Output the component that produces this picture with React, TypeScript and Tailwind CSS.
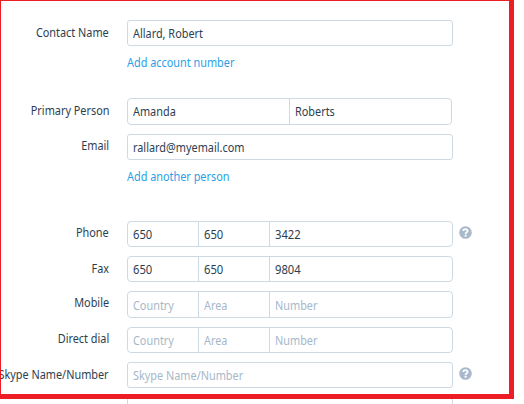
import React from "react";

type Cell = { text: string; width: string; hint?: boolean; digits?: boolean };

function Cells({ cells, box, pad }: { cells: Cell[]; box: string; pad: string }) {
  return (
    <div className={`flex shrink-0 border border-[#cddae3] bg-white ${box}`}>
      {cells.map((c, i) => (
        <div
          key={i}
          className={`flex pl-[5px] leading-[18px] ${pad} ${c.width} ${
            i > 0 ? "border-l border-[#cddae3]" : ""
          } ${c.hint ? "text-[#a6b8c9]" : "text-[#2c3e50]"}`}
        >
          <span className={`origin-left ${c.digits ? "scale-x-[0.9]" : "scale-x-[0.87]"}`}>{c.text}</span>
        </div>
      ))}
    </div>
  );
}

function Help() {
  return (
    <svg className="ml-[6px] mt-[5px] h-[13px] w-[13px] shrink-0" viewBox="0 0 13 13">
      <circle cx="6.5" cy="6.5" r="6.3" fill="#a9b9cb" />
      <path d="M4.3 5.1C4.3 2.6 8.7 2.6 8.7 5C8.7 6.4 6.6 6.3 6.6 7.9" fill="none" stroke="#fff" strokeWidth="1.8" />
      <path d="M5.6 8.8h2v1.8h-2z" fill="#fff" />
    </svg>
  );
}

function Row({
  label,
  row,
  cells,
  box = "h-[26px] w-[326px] rounded-[3px]",
  labelPad = "pt-[3px]",
  pad = "pt-[4px]",
  help,
}: {
  label: string;
  row: string;
  cells: Cell[];
  box?: string;
  labelPad?: string;
  pad?: string;
  help?: boolean;
}) {
  return (
    <div className={`flex shrink-0 items-start ${row}`}>
      <div className={`mr-[18px] flex w-[109px] shrink-0 justify-end leading-[18px] ${labelPad}`}>
        <span className="origin-right scale-x-[0.87]">{label}</span>
      </div>
      <Cells cells={cells} box={box} pad={pad} />
      {help && <Help />}
    </div>
  );
}

const phone = (a: string, b: string, c: string, hint = false): Cell[] => [
  { text: a, width: "w-[70px]", hint, digits: !hint },
  { text: b, width: "w-[71px]", hint, digits: !hint },
  { text: c, width: "w-[183px]", hint, digits: !hint },
];

export default function App() {
  return (
    <div className="relative h-[404px] w-[524px] overflow-hidden bg-white font-['Noto_Sans','Open_Sans',sans-serif] text-[12.5px] whitespace-nowrap text-[#2c3e50]">
      <div className="flex flex-col pt-5">
        <Row label="Contact Name" row="h-[34px]" labelPad="pt-[4px]" cells={[{ text: "Allard, Robert", width: "w-[324px]" }]} />
        <a className="ml-[127px] h-[44px] w-max origin-left scale-x-[0.87] leading-[18px] text-[#2a9fe6]">Add account number</a>
        <Row
          label="Primary Person"
          row="h-[36px]"
          labelPad="pt-[4px]"
          box="h-[27px] w-[325px] rounded-[4px]"
          cells={[
            { text: "Amanda", width: "w-[161px]" },
            { text: "Roberts", width: "w-[162px]" },
          ]}
        />
        <Row label="Email" row="h-[34px]" cells={[{ text: "rallard@myemail.com", width: "w-[324px]" }]} />
        <a className="ml-[127px] h-[53px] w-max origin-left scale-x-[0.87] leading-[18px] text-[#2a9fe6]">Add another person</a>
        <Row label="Phone" row="h-[35px]" box="h-[26px] w-[326px] rounded-[4px]" cells={phone("650", "650", "3422")} help />
        <Row label="Fax" row="h-[35px]" labelPad="pt-[4px]" box="h-[26px] w-[326px] rounded-[4px]" cells={phone("650", "650", "9804")} />
        <Row label="Mobile" row="h-[36px]" pad="pt-[5px]" box="h-[27px] w-[326px] rounded-[4px]" cells={phone("Country", "Area", "Number", true)} />
        <Row label="Direct dial" row="h-[35px]" box="h-[26px] w-[326px] rounded-[4px]" cells={phone("Country", "Area", "Number", true)} />
        <Row label="Skype Name/Number" row="h-[35px]" labelPad="pt-[4px]" cells={[{ text: "Skype Name/Number", width: "w-[324px]", hint: true }]} help />
        <Row label="" row="h-[26px]" cells={[{ text: "", width: "w-[324px]" }]} />
      </div>
      <div className="pointer-events-none absolute top-0 left-0 h-[399px] w-[514px] border-t border-r-[5px] border-b-[5px] border-l border-[#ee1c25]" />
    </div>
  );
}
